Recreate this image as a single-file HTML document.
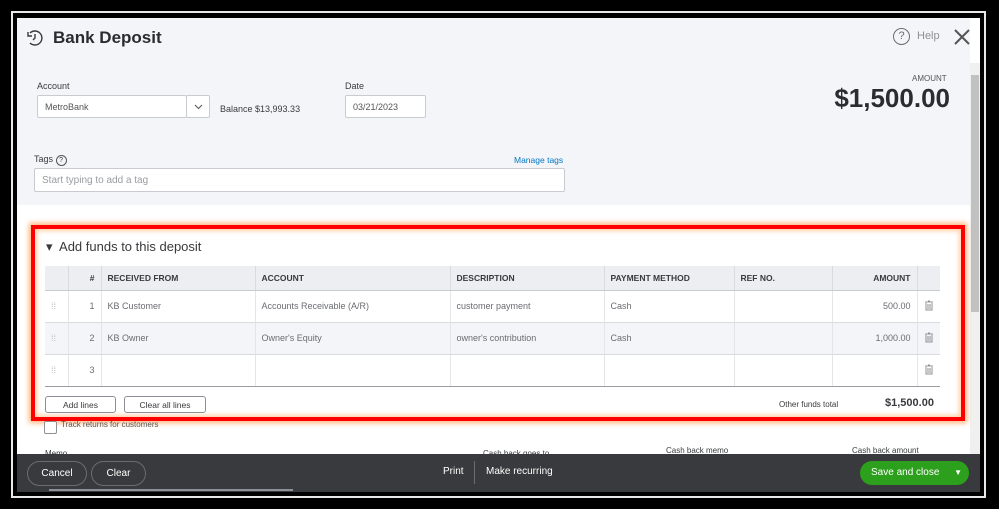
<!DOCTYPE html>
<html><head><style>
*{box-sizing:border-box;margin:0;padding:0}
body{width:999px;height:509px;background:#000;position:relative;overflow:hidden;font-family:"Liberation Sans",sans-serif;color:#393a3d}
.abs{position:absolute}
.wl{position:absolute;border:2px solid #e8e8e8}
#app{position:absolute;left:17px;top:18px;width:963px;height:474px;background:#fff;overflow:hidden}
#hdr{position:absolute;left:0;top:0;width:953px;height:187px;background:#f4f5f8}
.lbl{font-size:9px;color:#393a3d;position:absolute}
.inp{position:absolute;background:#fff;border:1px solid #c8cbd0;border-radius:2px;font-size:9px;color:#555;padding-left:7px;display:flex;align-items:center}
table{border-collapse:collapse;position:absolute;left:28px;top:248px;width:895px;font-size:9px}
th{background:#eceef1;height:24px;text-align:left;font-weight:bold;font-size:8.5px;color:#393a3d;padding-left:6px;border-right:1px solid #d9dbe0;border-bottom:1px solid #c8cbd0}
td{height:32px;padding-left:6px;color:#6b6c72;border-right:1px solid #e3e5e8;border-bottom:1px solid #d9dbe0}
tr.g td{background:#f4f5f8}
.r{text-align:right;padding-right:6px}
.btn{position:absolute;border:1px solid #8d9096;border-radius:3px;background:#fff;font-size:8.5px;display:flex;align-items:center;justify-content:center;color:#393a3d}
#foot{position:absolute;left:0;top:436px;width:963px;height:38px;background:#393a3d}
.fb{position:absolute;border:1px solid #6b6c72;border-radius:14px;color:#fff;font-size:10px;display:flex;align-items:center;justify-content:center;height:25px;top:6px}
</style></head><body>
<div class="wl" style="left:11px;top:11px;width:975px;height:487px"></div>
<div id="app">
 <div id="hdr"></div>
 <svg class="abs" style="left:9px;top:11px" width="18" height="18" viewBox="0 0 18 18" fill="none" stroke="#393a3d" stroke-width="1.4"><path d="M4 4a7 7 0 1 1 0 10"/><path d="M9 5v4l-2 2"/><path d="M2 3v4h4"/></svg>
 <div class="abs" style="left:36px;top:10px;font-size:17px;font-weight:bold;color:#2b2c30">Bank Deposit</div>
 <div class="abs" style="left:876px;top:10px;width:17px;height:17px;border:1.5px solid #6b6c72;border-radius:50%;font-size:11px;text-align:center;line-height:14px;color:#6b6c72">?</div>
 <div class="abs" style="left:900px;top:12px;font-size:11px;color:#8d9096">Help</div>
 <svg class="abs" style="left:936px;top:10px" width="18" height="18"><path d="M2 2L16 16M16 2L2 16" stroke="#555" stroke-width="2"/></svg>
 <div class="lbl" style="left:20px;top:63px">Account</div>
 <div class="inp" style="left:20px;top:77px;width:150px;height:23px">MetroBank</div>
 <div class="inp" style="left:169px;top:77px;width:24px;height:23px;padding:0;justify-content:center"><svg width="9" height="6"><path d="M1 1l3.5 3.5L8 1" stroke="#555" fill="none"/></svg></div>
 <div class="abs" style="left:203px;top:86px;font-size:9px">Balance $13,993.33</div>
 <div class="lbl" style="left:328px;top:63px">Date</div>
 <div class="inp" style="left:328px;top:77px;width:81px;height:23px">03/21/2023</div>
 <div class="abs" style="left:895px;top:56px;font-size:8px;color:#555">AMOUNT</div>
 <div class="abs" style="right:30px;top:65px;font-size:26px;font-weight:bold;color:#2b2c30">$1,500.00</div>
 <div class="lbl" style="left:17px;top:136px">Tags <span style="display:inline-block;width:11px;height:11px;border:1px solid #555;border-radius:50%;font-size:7px;text-align:center;line-height:9px">?</span></div>
 <div class="abs" style="left:497px;top:137px;font-size:8.5px;color:#0077c5">Manage tags</div>
 <div class="inp" style="left:17px;top:150px;width:531px;height:24px;color:#9a9ca1;font-size:10px">Start typing to add a tag</div>
 <div class="abs" style="left:953px;top:45px;width:10px;height:392px;background:#f0f0f0"></div>
 <div class="abs" style="left:954px;top:57px;width:8px;height:237px;background:#c1c1c1"></div>
 <div class="abs" style="left:14px;top:207px;width:934px;height:196px;border:4px solid #f00;box-shadow:0 0 5px 2px #ffb27a,inset 0 0 5px 2px #ffd0a8"></div>
 <div class="abs" style="left:29px;top:221px;font-size:13px;color:#393a3d">▾&nbsp; Add funds to this deposit</div>
 <table>
  <tr><th style="width:23px"></th><th style="width:33px;text-align:right;padding-right:6px">#</th><th style="width:154px">RECEIVED FROM</th><th style="width:195px">ACCOUNT</th><th style="width:154px">DESCRIPTION</th><th style="width:130px">PAYMENT METHOD</th><th style="width:98px">REF NO.</th><th style="width:85px" class="r">AMOUNT</th><th style="border-right:none"></th></tr>
  <tr><td style="color:#bbb">⁞⁞</td><td class="r">1</td><td>KB Customer</td><td>Accounts Receivable (A/R)</td><td>customer payment</td><td>Cash</td><td></td><td class="r">500.00</td><td style="border-right:none"><svg width="10" height="11"><path d="M1 2h8M4 1h2M2 3v7h6V3M4 4v5M6 4v5" stroke="#8d9096" fill="none"/></svg></td></tr>
  <tr class="g"><td style="color:#bbb">⁞⁞</td><td class="r">2</td><td>KB Owner</td><td>Owner's Equity</td><td>owner's contribution</td><td>Cash</td><td></td><td class="r">1,000.00</td><td style="border-right:none"><svg width="10" height="11"><path d="M1 2h8M4 1h2M2 3v7h6V3M4 4v5M6 4v5" stroke="#8d9096" fill="none"/></svg></td></tr>
  <tr><td style="color:#bbb;border-bottom:1px solid #9a9ca1">⁞⁞</td><td class="r" style="border-bottom:1px solid #9a9ca1">3</td><td style="border-bottom:1px solid #9a9ca1"></td><td style="border-bottom:1px solid #9a9ca1"></td><td style="border-bottom:1px solid #9a9ca1"></td><td style="border-bottom:1px solid #9a9ca1"></td><td style="border-bottom:1px solid #9a9ca1"></td><td style="border-bottom:1px solid #9a9ca1"></td><td style="border-right:none;border-bottom:1px solid #9a9ca1"><svg width="10" height="11"><path d="M1 2h8M4 1h2M2 3v7h6V3M4 4v5M6 4v5" stroke="#8d9096" fill="none"/></svg></td></tr>
 </table>
 <div class="btn" style="left:28px;top:378px;width:71px;height:17px">Add lines</div>
 <div class="btn" style="left:107px;top:378px;width:82px;height:17px">Clear all lines</div>
 <div class="abs" style="left:762px;top:382px;font-size:8px">Other funds total</div>
 <div class="abs" style="left:868px;top:379px;font-size:11px;font-weight:bold">$1,500.00</div>
 <div class="abs" style="left:27px;top:403px;width:13px;height:13px;border:1px solid #8d9096;border-radius:2px;background:#fff"></div>
 <div class="abs" style="left:44px;top:402px;font-size:8px;color:#555">Track returns for customers</div>
 <div class="abs" style="left:28px;top:431px;font-size:8px">Memo</div>
 <div class="abs" style="left:466px;top:431px;font-size:8px">Cash back goes to</div>
 <div class="abs" style="left:649px;top:428px;font-size:8px">Cash back memo</div>
 <div class="abs" style="left:835px;top:428px;font-size:8px">Cash back amount</div>
 <div id="foot">
  <div class="fb" style="left:10px;width:60px;top:7px">Cancel</div>
  <div class="fb" style="left:74px;width:55px;top:7px">Clear</div>
  <div class="abs" style="left:426px;top:12px;color:#fff;font-size:10px">Print</div>
  <div class="abs" style="left:457px;top:7px;width:1px;height:23px;background:#6b6c72"></div>
  <div class="abs" style="left:469px;top:12px;color:#fff;font-size:10px">Make recurring</div>
  <div class="abs" style="left:843px;top:7px;width:109px;height:24px;background:#2ca01c;border-radius:12px;color:#fff;font-size:10px;line-height:24px;padding-left:11px">Save and close <span style="margin-left:12px;font-size:8px">▼</span></div>
  <div class="abs" style="left:32px;top:35px;width:244px;height:2px;background:#8d9096"></div>
 </div>
</div>
</body></html>
